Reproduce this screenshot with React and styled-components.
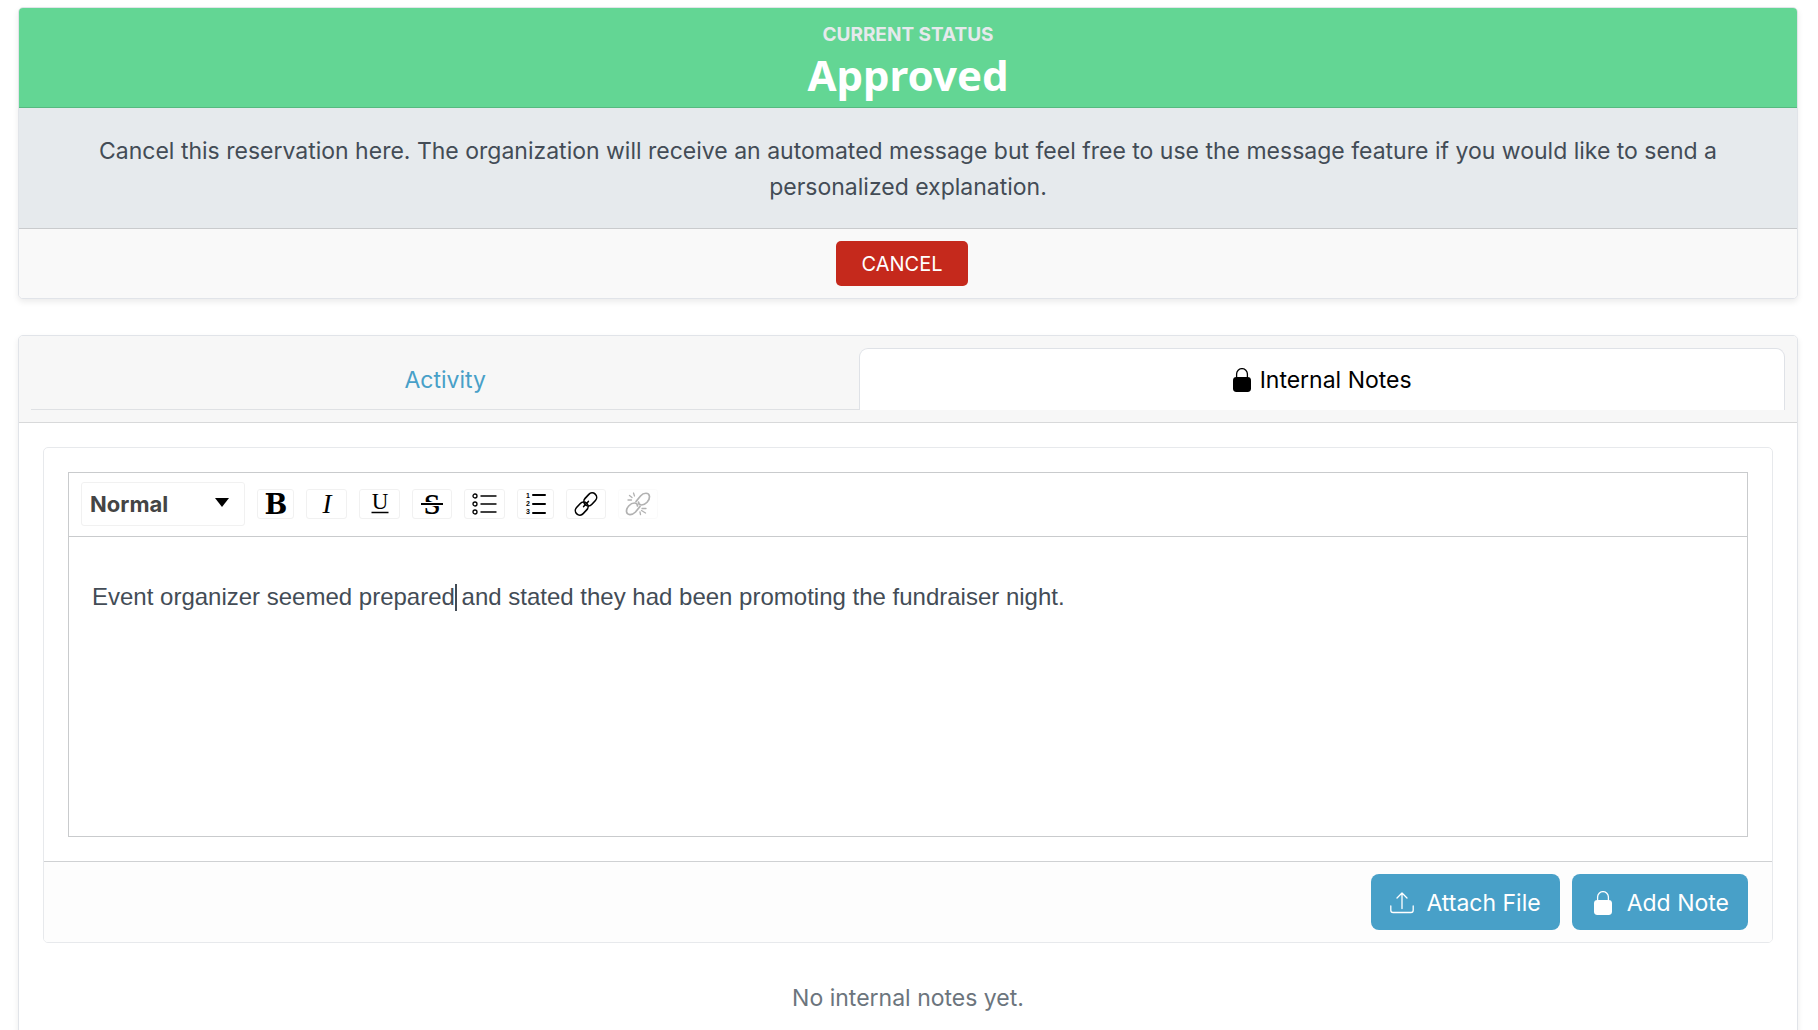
import React, { useLayoutEffect, useState } from "react";
import styled, { createGlobalStyle, css } from "styled-components";

const sans = `Inter, "Liberation Sans", sans-serif`;
const arial = `"Liberation Sans", Arial, sans-serif`;
const slab = `"DejaVu Serif", serif`;

const GlobalStyle = createGlobalStyle`
  *, *::before, *::after { box-sizing: border-box; }
  html { scrollbar-width: none; }
  body {
    margin: 0;
    background: #fff;
    color: #434c56;
    font-family: ${sans};
    font-size: 23px;
    line-height: 36px;
  }
  button, select, textarea { font: inherit; margin: 0; }
`;

const Page = styled.main`
  display: flex;
  flex-direction: column;
  gap: 36px;
  padding: 7px 20px 24px 18px;
`;

const Card = styled.section`
  border: 1px solid #e1e4e9;
  border-radius: 5px;
  background: #fff;
  box-shadow: 0 3px 6px rgba(0, 0, 0, 0.08);
  overflow: hidden;
`;

const StatusHeader = styled.header`
  display: flex;
  flex-direction: column;
  align-items: center;
  padding: 13px 24px 5px;
  background: #63d694;
  border-bottom: 1px solid #56b980;
`;

const StatusLabel = styled.span`
  font-size: 19px;
  font-weight: 700;
  line-height: 27px;
  color: #e6e9ec;
  text-transform: uppercase;
`;

const StatusValue = styled.h1`
  margin: 0;
  font-family: "Noto Sans", "Open Sans", sans-serif;
  font-size: 42px;
  font-weight: 700;
  line-height: 54px;
  color: #fff;
`;

const StatusMessage = styled.p`
  margin: 0;
  padding: 25px 72px 23px;
  background: #e6eaed;
  border-bottom: 1px solid #c9cbcd;
  text-align: center;
`;

const StatusFooter = styled.footer`
  display: flex;
  justify-content: center;
  padding: 12px;
  background: #f9f9f9;
`;

const CancelButton = styled.button`
  height: 45px;
  margin-right: 12px;
  padding: 0 25px;
  border: 0;
  border-radius: 5px;
  background: #c5291c;
  color: #fff;
  font-size: 20px;
  text-transform: uppercase;
  cursor: pointer;
`;

const TabHeader = styled.header`
  padding: 12px;
  background: #f7f7f7;
  border-bottom: 1px solid #d8d9da;
`;

const Tabs = styled.nav`
  display: flex;
  box-shadow: inset 0 -1px #dfe1e4;
`;

const Tab = styled.a`
  display: flex;
  flex: 1 1 auto;
  align-items: center;
  justify-content: center;
  gap: 9px;
  height: 62px;
  border: 1px solid transparent;
  border-bottom: 0;
  border-radius: 9px 9px 0 0;
  color: #48a0c8;
  text-decoration: none;
  ${(p) =>
    p.$active &&
    css`
      background: #fff;
      border-color: #dfe2e7;
      color: #000;
    `}
`;

const TabBody = styled.div`
  padding: 24px;
`;

const NoteForm = styled.form`
  border: 1px solid #e7e9ec;
  border-radius: 5px;
  overflow: hidden;
`;

const EditorArea = styled.div`
  padding: 24px;
`;

const Editor = styled.div`
  border: 1px solid #c9cbcd;
`;

const Toolbar = styled.div`
  display: flex;
  align-items: center;
  gap: 12px;
  padding: 9px 12px 10px;
  border-bottom: 1px solid #c9cbcd;
`;

const BlockPicker = styled.div`
  position: relative;
  width: 164px;
`;

const BlockSelect = styled.select`
  display: block;
  width: 100%;
  height: 44px;
  padding: 0 8px;
  border: 1px solid #f1f1f1;
  border-radius: 3px;
  background: #fff;
  color: #444;
  font-size: 22px;
  font-weight: 700;
  appearance: none;
`;

const PickerArrow = styled.svg`
  position: absolute;
  top: 16px;
  right: 16px;
  pointer-events: none;
`;

const ToolButton = styled.button`
  display: flex;
  align-items: center;
  justify-content: center;
  width: ${(p) => p.$width}px;
  height: 30px;
  padding: 0;
  border: 1px solid #f1f1f1;
  border-radius: 3px;
  background: #fff;
  color: #000;
  overflow: visible;
  &:disabled { opacity: 0.3; }
`;

const Writing = styled.div`
  position: relative;
  display: flex;
`;

const NoteInput = styled.textarea`
  width: 100%;
  height: 299px;
  padding: 42px 23px;
  border: 0;
  outline: 0;
  resize: none;
  background: transparent;
  color: #434c56;
  font-family: ${arial};
  font-size: 24px;
  line-height: 36px;
  caret-color: transparent;
`;

const Caret = styled.span`
  position: absolute;
  top: 47px;
  width: 2px;
  height: 27px;
  background: #434c56;
`;

const FormFooter = styled.footer`
  display: flex;
  justify-content: flex-end;
  gap: 12px;
  padding: 12px 24px;
  border-top: 1px solid #cfd1d3;
  background: #fdfdfd;
`;

const ActionButton = styled.button`
  display: flex;
  align-items: center;
  gap: 12px;
  height: 56px;
  padding: 1px 19px 0;
  border: 0;
  border-radius: 8px;
  background: #48a0c8;
  color: #fff;
  cursor: pointer;
`;

const EmptyMessage = styled.p`
  margin: 37px 0 0;
  color: #6c757d;
  text-align: center;
`;

function LockIcon({ width }) {
  return (
    <svg width={width} height="24" viewBox={`${(18 - width) / 2} 0 ${width} 24`} aria-hidden="true">
      <path d="M3.6 10V6a5.4 5.4 0 0 1 10.8 0v4" fill="none" stroke="currentColor" strokeWidth="1.3" />
      <rect x="0" y="9" width="18" height="15" rx="3.4" fill="currentColor" />
    </svg>
  );
}

function UploadIcon() {
  return (
    <svg width="24" height="24" viewBox="0 0 24 24" fill="none" stroke="currentColor" strokeWidth="1.3" strokeLinecap="round" strokeLinejoin="round" aria-hidden="true">
      <path d="M12 17.5V2M7 7l5-5 5 5" />
      <path d="M.8 15v4.2c0 1.6.7 2.3 2.3 2.3h17.8c1.6 0 2.3-.7 2.3-2.3V15" />
    </svg>
  );
}

const Icon = styled.svg`
  flex: none;
  overflow: visible;
`;

function ToolIcon({ children }) {
  return (
    <Icon width="26" height="24" viewBox="0 0 26 24" fill="none" stroke="currentColor" aria-hidden="true">
      {children}
    </Icon>
  );
}

const Glyph = styled.text`
  font-family: ${(p) => p.$family || `"Liberation Serif", serif`};
  font-size: ${(p) => p.$size}px;
  font-weight: ${(p) => (p.$bold ? 700 : 400)};
  font-style: ${(p) => (p.$italic ? "italic" : "normal")};
  fill: currentColor;
  stroke: none;
  text-anchor: middle;
`;

const link = (
  <g transform="rotate(-47 13 12)" strokeWidth="1.6" strokeLinecap="round">
    <rect x="-0.5" y="7.5" width="14.5" height="9" rx="4.5" />
    <rect x="12" y="7.5" width="14.5" height="9" rx="4.5" />
    <path d="M9.500 12h7" />
  </g>
);

const unlink = (
  <g strokeWidth="1.7" strokeLinecap="round">
    <path d="M11 9.500l4.500-5.500c3-3.500 8.500-4 9 .5.2 4-4 8.500-8 8.500-2 0-3-1-3-3" />
    <path d="M15 14.500l-4.500 5.500c-3 3-8.500 4-9-.500-.200-4 4-8.500 8-8.500 2 0 3 1 3 3" />
    <path d="M4.500 3.500l2.500 2M8.500 1l1 3M3 8h3.500M17 16.500h4M16.500 18.500l4 2.500M15 20l.500 2.500" strokeWidth="1.300" />
  </g>
);

const tools = [
  {
    label: "Bold",
    width: 37,
    icon: <Glyph x="13" y="22" $size="27" $bold $family={slab}>B</Glyph>,
  },
  {
    label: "Italic",
    width: 41,
    icon: <Glyph x="13" y="21" $size="27" $italic>I</Glyph>,
  },
  {
    label: "Underline",
    width: 41,
    icon: (
      <>
        <Glyph x="13" y="17" $size="23">U</Glyph>
        <path d="M4.500 20.500h17" strokeWidth="1.500" />
      </>
    ),
  },
  {
    label: "Strikethrough",
    width: 40,
    icon: (
      <>
        <Glyph x="13" y="22" $size="29" $bold>S</Glyph>
        <path d="M2 12h22" stroke="#fff" strokeWidth="4" />
        <path d="M2 12h22" strokeWidth="2" />
      </>
    ),
  },
  {
    label: "Bulleted list",
    width: 41,
    icon: (
      <>
        <g strokeWidth="1.3">
          <circle cx="3" cy="4" r="2" />
          <circle cx="3" cy="12" r="2" />
          <circle cx="3" cy="20" r="2" />
        </g>
        <path d="M9 4h15M9 12h15M9 20h15" strokeWidth="1.4" strokeLinecap="round" />
      </>
    ),
  },
  {
    label: "Numbered list",
    width: 37,
    icon: (
      <>
        <Glyph x="5" y="6" $size="7" $bold $family={arial}>1</Glyph>
        <Glyph x="5" y="14" $size="7" $bold $family={arial}>2</Glyph>
        <Glyph x="5" y="22" $size="7" $bold $family={arial}>3</Glyph>
        <path d="M10 3h12M10 12h12M10 21h12" strokeWidth="2" strokeLinecap="round" />
      </>
    ),
  },
  { label: "Link", width: 40, icon: link },
  { label: "Unlink", width: 40, icon: unlink, disabled: true },
];

const initialNote =
  "Event organizer seemed prepared and stated they had been promoting the fundraiser night.";

const textInset = 23;

function NoteEditor() {
  const [note, setNote] = useState(initialNote);
  const [cursor, setCursor] = useState(initialNote.indexOf(" and"));
  const [caretX, setCaretX] = useState(textInset);

  useLayoutEffect(() => {
    const ctx = document.createElement("canvas").getContext("2d");
    ctx.font = `24px ${arial}`;
    setCaretX(textInset + Math.round(ctx.measureText(note.slice(0, cursor)).width));
  }, [note, cursor]);

  return (
    <Editor>
      <Toolbar role="toolbar" aria-label="Formatting">
        <BlockPicker>
          <BlockSelect aria-label="Block type" defaultValue="Normal">
            <option>Normal</option>
          </BlockSelect>
          <PickerArrow width="14" height="9" viewBox="0 0 14 9" aria-hidden="true">
            <path d="M0 0h14L7 9z" />
          </PickerArrow>
        </BlockPicker>
        {tools.map((t) => (
          <ToolButton key={t.label} type="button" aria-label={t.label} $width={t.width} disabled={t.disabled}>
            <ToolIcon>{t.icon}</ToolIcon>
          </ToolButton>
        ))}
      </Toolbar>
      <Writing>
        <NoteInput
          aria-label="Internal note"
          spellCheck={false}
          value={note}
          onChange={(e) => {
            setNote(e.target.value);
            setCursor(e.target.selectionStart);
          }}
          onSelect={(e) => setCursor(e.target.selectionStart)}
        />
        <Caret style={{ left: caretX }} />
      </Writing>
    </Editor>
  );
}

export default function App() {
  return (
    <>
      <GlobalStyle />
      <Page>
        <Card>
          <StatusHeader>
            <StatusLabel>Current Status</StatusLabel>
            <StatusValue>Approved</StatusValue>
          </StatusHeader>
          <StatusMessage>
            Cancel this reservation here. The organization will receive an automated message but feel
            free to use the message feature if you would like to send a personalized explanation.
          </StatusMessage>
          <StatusFooter>
            <CancelButton type="button">Cancel</CancelButton>
          </StatusFooter>
        </Card>
        <Card>
          <TabHeader>
            <Tabs>
              <Tab href="#activity">Activity</Tab>
              <Tab href="#notes" $active aria-current="page">
                <LockIcon width={18} />
                Internal Notes
              </Tab>
            </Tabs>
          </TabHeader>
          <TabBody>
            <NoteForm onSubmit={(e) => e.preventDefault()}>
              <EditorArea>
                <NoteEditor />
              </EditorArea>
              <FormFooter>
                <ActionButton type="button">
                  <UploadIcon />
                  Attach File
                </ActionButton>
                <ActionButton type="submit">
                  <LockIcon width={24} />
                  Add Note
                </ActionButton>
              </FormFooter>
            </NoteForm>
            <EmptyMessage>No internal notes yet.</EmptyMessage>
          </TabBody>
        </Card>
      </Page>
    </>
  );
}
